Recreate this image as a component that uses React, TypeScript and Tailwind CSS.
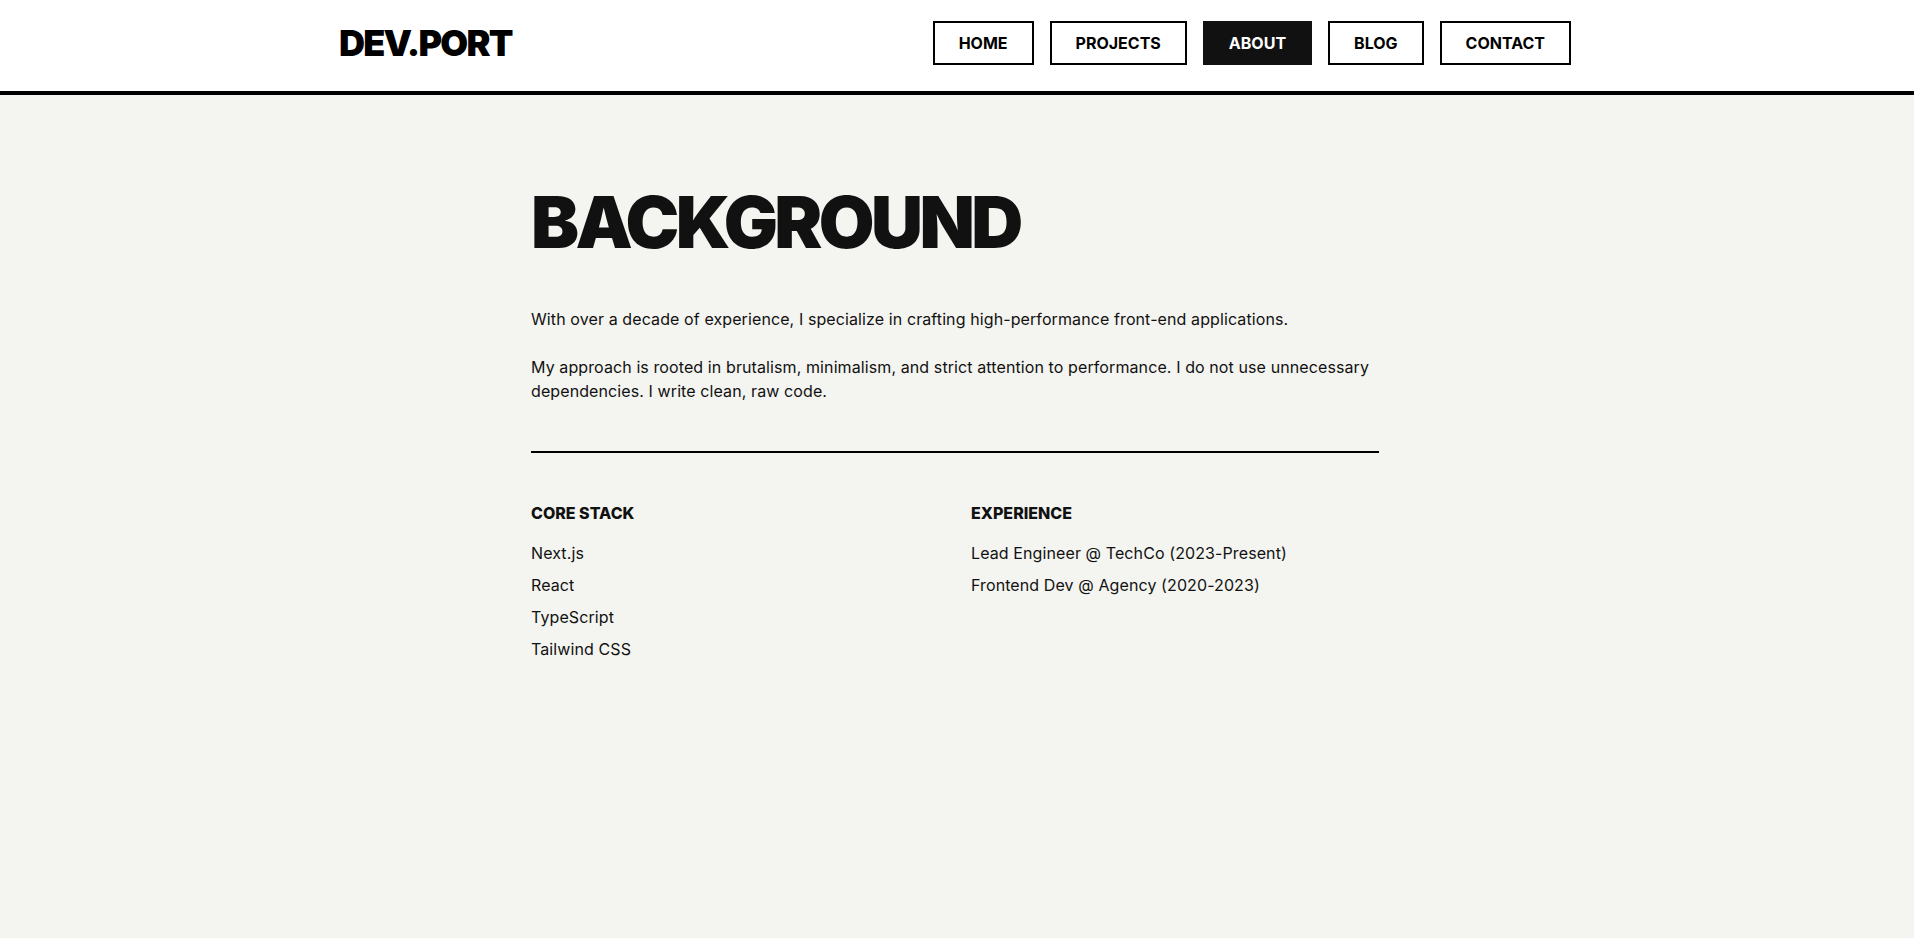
import React from "react";

const navItems = ["HOME", "PROJECTS", "ABOUT", "BLOG", "CONTACT"];
const stack = ["Next.js", "React", "TypeScript", "Tailwind CSS"];
const experience = [
  "Lead Engineer @ TechCo (2023-Present)",
  "Frontend Dev @ Agency (2020-2023)",
];

export default function App() {
  return (
    <div
      className="min-h-screen bg-[#f4f4f0] text-[#111111]"
      style={{ fontFamily: "Inter, 'Noto Sans', Arial, sans-serif" }}
    >
      <header className="bg-white border-b-4 border-black pr-1">
        <div className="max-w-7xl mx-auto px-6 pt-[21px] pb-[26px] flex items-center justify-between">
          <div className="text-4xl font-black tracking-tighter text-black leading-none">
            DEV.PORT
          </div>
          <nav className="flex items-center gap-4">
            {navItems.map((item) =>
              item === "ABOUT" ? (
                <a
                  key={item}
                  className="px-6 py-2 text-base font-bold border-2 border-[#111111] bg-[#111111] text-white leading-6"
                >
                  {item}
                </a>
              ) : (
                <a
                  key={item}
                  className="px-6 py-2 text-base font-bold border-2 border-black bg-white text-black leading-6"
                >
                  {item}
                </a>
              )
            )}
          </nav>
        </div>
      </header>

      <div className="pr-1">
        <main className="max-w-4xl mx-auto px-6 pt-[91px] pb-24">
          <h1 className="text-7xl font-black tracking-tighter leading-none mb-[49px] text-[#111111]">
            BACKGROUND
          </h1>
          <div className="text-base leading-6 tracking-[0.1px] space-y-6 mb-12 text-[#111111]">
            <p>
              With over a decade of experience, I specialize in crafting
              high-performance front-end applications.
            </p>
            <p>
              My approach is rooted in brutalism, minimalism, and strict
              attention to performance. I do not use unnecessary dependencies.
              I write clean, raw code.
            </p>
          </div>
          <section className="border-t-2 border-black pt-12 grid grid-cols-2 gap-8">
            <div>
              <h2 className="text-base font-extrabold leading-6 mb-4 uppercase">
                Core Stack
              </h2>
              <ul className="space-y-2 text-base leading-6 tracking-[0.1px]">
                {stack.map((s) => (
                  <li key={s}>{s}</li>
                ))}
              </ul>
            </div>
            <div>
              <h2 className="text-base font-extrabold leading-6 mb-4 uppercase">
                Experience
              </h2>
              <ul className="space-y-2 text-base leading-6 tracking-[0.1px]">
                {experience.map((s) => (
                  <li key={s}>{s}</li>
                ))}
              </ul>
            </div>
          </section>
        </main>
      </div>
    </div>
  );
}
